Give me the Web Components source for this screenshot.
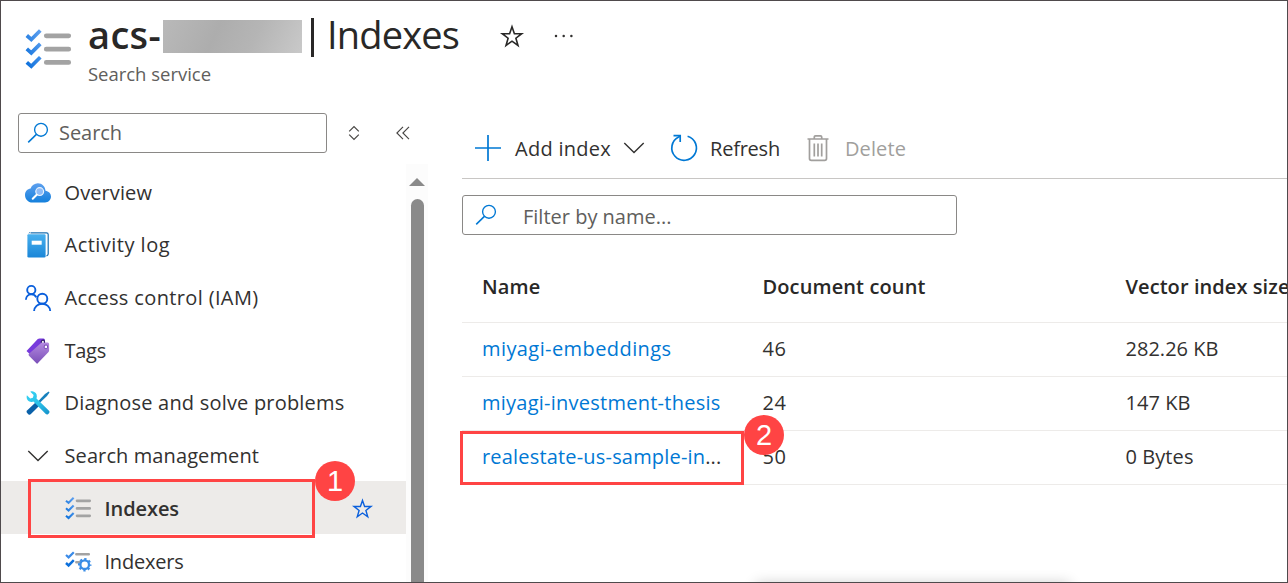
<!DOCTYPE html>
<html lang="en">
<head>
<meta charset="utf-8">
<title>Indexes</title>
<style>
html,body{margin:0;padding:0}
body{width:1288px;height:583px;overflow:hidden;background:#fff;font-family:"Open Sans","Noto Sans",sans-serif;color:#323130}
</style>
</head>
<body>
<portal-page></portal-page>
<script>
const define=(name,html,ready)=>{
  const t=document.createElement('template');t.innerHTML=html;
  customElements.define(name,class extends HTMLElement{
    connectedCallback(){
      if(this.shadowRoot)return;
      this.attachShadow({mode:'open'}).append(t.content.cloneNode(true));
      if(ready)ready(this,this.shadowRoot);
    }
  });
};

const ICONS={
 checks:[46,42,`<defs><linearGradient id="g" x1="0" y1="1" x2="1" y2="0"><stop offset="0" stop-color="#0c70dc"/><stop offset="1" stop-color="#5ea0ef"/></linearGradient></defs>
  <g fill="none" stroke="url(#g)" stroke-width="3.7"><path d="M1.8 6.500 6.300 10.500 15.300 1.500M1.800 19.900 6.300 23.900 15.300 14.900M1.800 33.300 6.300 37.300 15.300 28.300"/></g>
  <path d="M21.3 6.8H43.7M21.3 20.2H43.7M21.3 33.4H43.7" stroke="#a3a3a3" stroke-width="4.8" stroke-linecap="round"/>`],
 checkgear:[26,24,`<path d="M1 5 3.6 7.4 8.8 2.2" fill="none" stroke="#3b8be8" stroke-width="2.2"/><path d="M1 13 3.6 15.4 8.8 10.2" fill="none" stroke="#0c70dc" stroke-width="2.500"/>
  <path d="M11.3 4.3H23.8M11.3 12.2H15" stroke="#a3a3a3" stroke-width="2.5" stroke-linecap="round"/>
  <circle cx="19.700" cy="14.700" r="4.300" fill="#fff" stroke="#3a8de6" stroke-width="2.300"/>
  <circle cx="19.700" cy="14.700" r="5.600" fill="none" stroke="#3a8de6" stroke-width="2.300" stroke-dasharray="2.200 2.198" stroke-dashoffset="1.100"/>`],
 search:[22,22,`<circle cx="14" cy="7.8" r="6.4" fill="none" stroke="#0078d4" stroke-width="1.35"/><path d="M9.4 12.4 1.2 20.4" stroke="#0078d4" stroke-width="1.5"/>`],
 cloud:[26,20,`<defs><linearGradient id="c" x1="0" y1="0" x2="0" y2="1"><stop offset="0" stop-color="#5ea0ef"/><stop offset="1" stop-color="#1480dc"/></linearGradient></defs>
  <path d="M26 13.6C26 10.4 23.5 8.2 20.5 7.8 20.3 3.5 17 .2 12.9.2 9.6.2 6.700 2.300 5.600 5.500 2.400 5.900 0 8.500 0 11.900 0 16 3.200 19.500 7.300 19.500H20C23.400 19.500 26 17 26 13.600Z" fill="url(#c)"/>
  <circle cx="14.700" cy="8.600" r="3.900" fill="#8fbcf7" stroke="#e9f2fd" stroke-width="1.200"/><path d="M11.700 11.700 7.700 15.800" stroke="#fff" stroke-width="2" stroke-linecap="round"/>`],
 log:[22,26,`<defs><linearGradient id="l" x1="0" y1="0" x2="0" y2="1"><stop offset="0" stop-color="#48b0ee"/><stop offset="1" stop-color="#1a86d8"/></linearGradient></defs>
  <path d="M3.500.800H19.500Q21.200.800 21.200 2.500V21.800Q21.200 23.200 19.500 24" fill="#fff" stroke="#1a6fb0" stroke-width="1.200"/><path d="M1.800 1.200 2.800.500" stroke="#1a6fb0"/>
  <path d="M.400 3.200Q.400 2.200 1.400 2.200H17.400Q18.600 2.200 18.600 3.400V24.200Q18.600 25.500 17.300 25.500H1.700Q.400 25.500.400 24.200Z" fill="url(#l)"/><rect x="4.700" y="8.700" width="10" height="4" fill="#fff"/>`],
 people:[26,26,`<g fill="none" stroke="#0a5fdc" stroke-width="1.900"><circle cx="6.300" cy="5" r="4.100"/><circle cx="17.300" cy="13.700" r="5"/><path d="M.900 14.800C1 11.700 3.300 9.300 6.300 9.300 8.500 9.300 10.400 10.500 11.300 12.300M9.100 26C9.300 21.900 12.700 18.800 17.200 18.800S25 21.900 25.200 26"/></g>`],
 tag:[24,26,`<defs><linearGradient id="t" x1="0" y1="0" x2="0" y2="1"><stop offset="0" stop-color="#b48ae0"/><stop offset="1" stop-color="#7a4fb8"/></linearGradient></defs>
  <path d="M.500 13 11.800 1.100Q12.500.500 13.500.500H17.500Q19 .600 18.900 2L19 6 5 17.300Z" fill="#773adc"/>
  <path d="M3 15.700 14.800 5.200Q15.600 4.500 16.700 4.500H21.700Q23.100 4.600 23.100 6V12.500Q23 13.500 22.300 14.200L11.500 25.400Q11 25.900 10.400 25.300L3 17.700Q2 16.700 3 15.700Z" fill="url(#t)"/>
  <rect x="18.300" y="7.200" width="3.200" height="3.200" rx=".800" fill="#fff" stroke="#5e2ca8" stroke-width=".800"/><path d="M15.300 4.800V3.300Q15.600 2 17.300 2.100 18.700 2.300 18.500 4.800" stroke="#341a6e" stroke-width="1.200" fill="#eee"/>`],
 tools:[24,24,`<defs><linearGradient id="w" x1="0" y1="0" x2="1" y2="1"><stop offset="0" stop-color="#36d3f3"/><stop offset=".55" stop-color="#2bc0e8"/><stop offset="1" stop-color="#148fc8"/></linearGradient></defs>
  <path d="M22.700.500 23.500 1.400 21 5 11.500 14 10 12.500 19 3Z" fill="#1780bd"/><path d="M9.500 11.500 13 15 4.700 23.300Q3.500 24.200 2.300 23.200L.900 21.700Q0 20.600 1 19.500Z" fill="#0a61a9"/>
  <path d="M4.300.700 7.600 4.100 6.900 6.700 4.200 7.500.900 4.300C0 7.500 1.500 10.300 4.400 10.700 5.700 11 6.600 10.900 7.400 10.600L19.800 23.100Q21 24 22.200 23L23.200 21.900Q24 20.800 23 19.700L10.500 7.500C11.400 4.500 10.600 2 8.300.900 7 .200 5.600.200 4.300.700Z" fill="url(#w)"/>`],
 chev:[22,14,`<path d="M1.300 2 11 11.500 20.700 2" fill="none" stroke="#323130" stroke-width="1.400"/>`],
 star:[24,24,`<path d="M12 2.800 14.400 9.700H21.700L15.900 14.200 18 21.500 12 17.200 6 21.500 8.100 14.200 2.300 9.700H9.600Z" fill="none" stroke="currentColor" stroke-width="1.600"/>`],
 dots:[22,6,`<g fill="#323130"><circle cx="3" cy="3" r="1.250"/><circle cx="10.700" cy="3" r="1.250"/><circle cx="18.400" cy="3" r="1.250"/></g>`],
 sort:[12,16,`<path d="M1.200 6.300 6 1.500 10.800 6.300M1.200 9.700 6 14.500 10.800 9.700" fill="none" stroke="#484644" stroke-width="1.200"/>`],
 collapse:[14,14,`<path d="M7 .800.900 7 7 13.200M13 .800 6.900 7 13 13.200" fill="none" stroke="#484644" stroke-width="1.150"/>`],
 plus:[26,26,`<path d="M13 0V26M0 13H26" stroke="#0078d4" stroke-width="1.700"/>`],
 refresh:[28,28,`<path d="M17.600 2.200A12.300 12.300 0 1 1 8.600 3L10.200 2" fill="none" stroke="#0078d4" stroke-width="1.700"/><path d="M3.500 1.700H10.200V8" fill="none" stroke="#0078d4" stroke-width="1.700"/>`],
 trash:[22,28,`<g fill="none" stroke="#a19f9d" stroke-width="1.700"><path d="M.500 5H21.500M7.300 5V3Q7.300 1.800 8.500 1.800H13.500Q14.700 1.800 14.700 3V5M2.500 5V24.500Q2.500 26.300 4.300 26.300H17.700Q19.500 26.300 19.500 24.500V5M7.300 9.500V22.500M11 9.500V22.500M14.700 9.500V22.500"/></g>`]
};
define('ui-icon',`<style>:host{display:block;flex:none}svg{display:block;overflow:visible}</style><div></div>`,(el,r)=>{
  const [w,h,body]=ICONS[el.getAttribute('name')];
  const W=+(el.getAttribute('width')||w);
  r.querySelector('div').innerHTML=`<svg width="${W}" height="${W*h/w}" viewBox="0 0 ${w} ${h}">${body}</svg>`;
});

/* Text label whose tracking is adjusted so that it fills the width in its w attribute. */
define('ui-label',`<style>:host{display:block;flex:none;font-size:20px;line-height:28px;white-space:pre}span{display:inline-block}</style><span><slot></slot></span>`,(el,r)=>{
  const w=+el.getAttribute('w'),s=r.querySelector('span');
  const n=[...el.textContent].length;
  s.style.letterSpacing=((w-s.getBoundingClientRect().width)/n)+'px';
  el.style.width=w+'px';
});

define('search-field',`<style>
:host{display:flex;align-items:center;box-sizing:border-box;height:40px;border:1px solid #8a8886;border-radius:3px;color:#605e5c;padding-left:9px;gap:var(--gap,9px)}
</style><ui-icon name="search"></ui-icon><slot></slot>`);

define('page-header',`<style>
:host{display:flex;height:112px;box-sizing:border-box;padding-left:24px}
.ic{padding-top:28px;width:46px;margin-right:17px}
.t{display:flex;align-items:center;height:40px;margin-top:13px;color:#292827}
.t ui-label{font-size:38px;line-height:40px}
.b{font-weight:600}
.mask{width:139px;height:33px;margin:4px 6px 0 2px;background:linear-gradient(115deg,#b9b9b9,#adadad 38%,#b5b5b5 65%,#c9c9c9)}
.bar{width:3px;height:39px;background:#292827;margin:6px 13px 0 3px}
.star{margin:3px 0 0 41px}.dots{margin:3px 0 0 29px}
.s{color:#605e5c;margin-top:6px}.s ui-label{font-size:18.500px}
</style><div class="ic"><ui-icon name="checks"></ui-icon></div>
<div><div class="t"><ui-label class="b" w="73">acs-</ui-label><div class="mask"></div><div class="bar"></div><ui-label w="132">Indexes</ui-label><ui-icon class="star" name="star"></ui-icon><ui-icon class="dots" name="dots"></ui-icon></div>
<div class="s"><ui-label w="123">Search service</ui-label></div></div>`);

define('nav-item',`<style>
:host{display:flex;align-items:center;height:52.700px;box-sizing:border-box;padding:2.700px 0 0 24px;width:405px}
:host([sub]){padding-left:64px}
:host([selected]){background:#edebe9;font-weight:600}
.i{width:26px;display:flex;justify-content:center;margin-right:13.500px}
.fav{color:#0a5fdc;margin-left:173px}
:host(:not([selected])) .fav{display:none}
</style><div class="i"></div><slot></slot><ui-icon class="fav" name="star" width="21"></ui-icon>`,(el,r)=>{
  const icon=document.createElement('ui-icon');
  icon.setAttribute('name',el.getAttribute('icon'));
  if(el.hasAttribute('sub'))icon.setAttribute('width','26');
  r.querySelector('.i').append(icon);
});

define('side-nav',`<style>
:host{display:flex;flex-direction:column;width:427px;flex:none}
.top{display:flex;align-items:center;padding-left:17px;height:40px}
search-field{width:309px;padding-left:8px;--gap:10px}
.sort{margin-left:20.500px}.col{margin-left:36.500px;margin-top:-1px}
.body{display:flex;margin-top:11px;flex:1;min-height:0}
.list{width:405px;padding-top:1px}
.scroll{width:22px;background:#fcfcfc;display:flex;flex-direction:column;align-items:center}
.up{width:0;height:0;border:8px solid transparent;border-top:0;border-bottom:8px solid #8a8a8a;margin:14px 0 13px}
.thumb{width:13px;flex:1;background:#8a8a8a;border-radius:7px 7px 0 0}
</style>
<div class="top"><search-field><ui-label w="63">Search</ui-label></search-field><ui-icon class="sort" name="sort"></ui-icon><ui-icon class="col" name="collapse"></ui-icon></div>
<div class="body"><div class="list">
<nav-item icon="cloud"><ui-label w="87.5">Overview</ui-label></nav-item>
<nav-item icon="log"><ui-label w="105.5">Activity log</ui-label></nav-item>
<nav-item icon="people"><ui-label w="194">Access control (IAM)</ui-label></nav-item>
<nav-item icon="tag"><ui-label w="41.5">Tags</ui-label></nav-item>
<nav-item icon="tools"><ui-label w="280">Diagnose and solve problems</ui-label></nav-item>
<nav-item icon="chev"><ui-label w="194.5">Search management</ui-label></nav-item>
<nav-item icon="checks" sub selected><ui-label w="74.5">Indexes</ui-label></nav-item>
<nav-item icon="checkgear" sub><ui-label w="79">Indexers</ui-label></nav-item>
</div><div class="scroll"><div class="up"></div><div class="thumb"></div></div></div>`);

define('command-bar',`<style>
:host{display:flex;align-items:center;height:65px;box-sizing:border-box;padding:4px 0 0 13px;border-bottom:1px solid #c8c6c4}
ui-label{margin-top:2px}
.r{margin:0 12px 0 25px}.x{margin:0 16px 0 27px}.p{margin-right:14px}.c{margin-left:12px}.d{color:#a19f9d}
</style><ui-icon class="p" name="plus"></ui-icon><ui-label w="96">Add index</ui-label><ui-icon class="c" name="chev"></ui-icon>
<ui-icon class="r" name="refresh"></ui-icon><ui-label w="70">Refresh</ui-label><ui-icon class="x" name="trash"></ui-icon><ui-label class="d" w="61">Delete</ui-label>`);

define('table-row',`<style>
:host{display:grid;grid-template-columns:280.500px 363px 1fr;align-items:center;height:54px;box-sizing:border-box;border-bottom:1px solid #edebe9;padding:0 0 1px 20px;color:#323130}
:host([head]){height:88px;padding-bottom:0;padding-top:16px;font-weight:600;color:#292827}
::slotted(.k){color:#0078d4}
</style><slot></slot>`);

define('index-blade',`<style>
:host{display:flex;flex-direction:column;flex:1;min-width:0;padding-left:34px;overflow:hidden}
search-field{width:495px;margin-top:16px;--gap:26px;padding-left:12px}
search-field ui-label{margin-top:3px}
.e{color:#323130}
</style><command-bar></command-bar>
<search-field><ui-label w="148.5">Filter by name...</ui-label></search-field>
<table-row head><ui-label w="58.5">Name</ui-label><ui-label w="163">Document count</ui-label><ui-label w="164">Vector index size</ui-label></table-row>
<table-row><ui-label class="k" w="189.5">miyagi-embeddings</ui-label><ui-label w="24">46</ui-label><ui-label w="93">282.26 KB</ui-label></table-row>
<table-row><ui-label class="k" w="238.5">miyagi-investment-thesis</ui-label><ui-label w="24">24</ui-label><ui-label w="65">147 KB</ui-label></table-row>
<table-row><ui-label class="k" w="239.5">realestate-us-sample-in<span class="e">...</span></ui-label><ui-label w="24">50</ui-label><ui-label w="68">0 Bytes</ui-label></table-row>`);

define('step-callout',`<style>
:host{position:absolute;box-sizing:border-box;border:3px solid #ff4444}
div{position:absolute;width:40px;height:40px;border-radius:50%;background:#ff4444;color:#fff;font:29px/40px "Liberation Sans",Arial,sans-serif;text-align:center;right:-43px;top:var(--t)}
</style><div><slot></slot></div>`);

define('portal-page',`<style>
:host{display:flex;flex-direction:column;position:relative;width:1288px;height:583px;box-sizing:border-box;border:1px solid #4f4a4c;overflow:hidden;background:#fff}
page-header{flex:none}
.m{display:flex;flex:1;min-height:0}
index-blade{margin-top:1px}
.one{left:27px;top:478px;width:287px;height:59px;--t:-21px}
.two{left:459px;top:430px;width:284px;height:54px;--t:-19px}
.sheet{position:absolute;left:757px;top:584px;width:310px;height:40px;box-shadow:0 0 14px 2px rgba(0,0,0,.2)}
</style><page-header></page-header>
<div class="m"><side-nav></side-nav><index-blade></index-blade></div>
<div class="sheet"></div>
<step-callout class="one">1</step-callout><step-callout class="two">2</step-callout>`);
</script>
</body>
</html>
